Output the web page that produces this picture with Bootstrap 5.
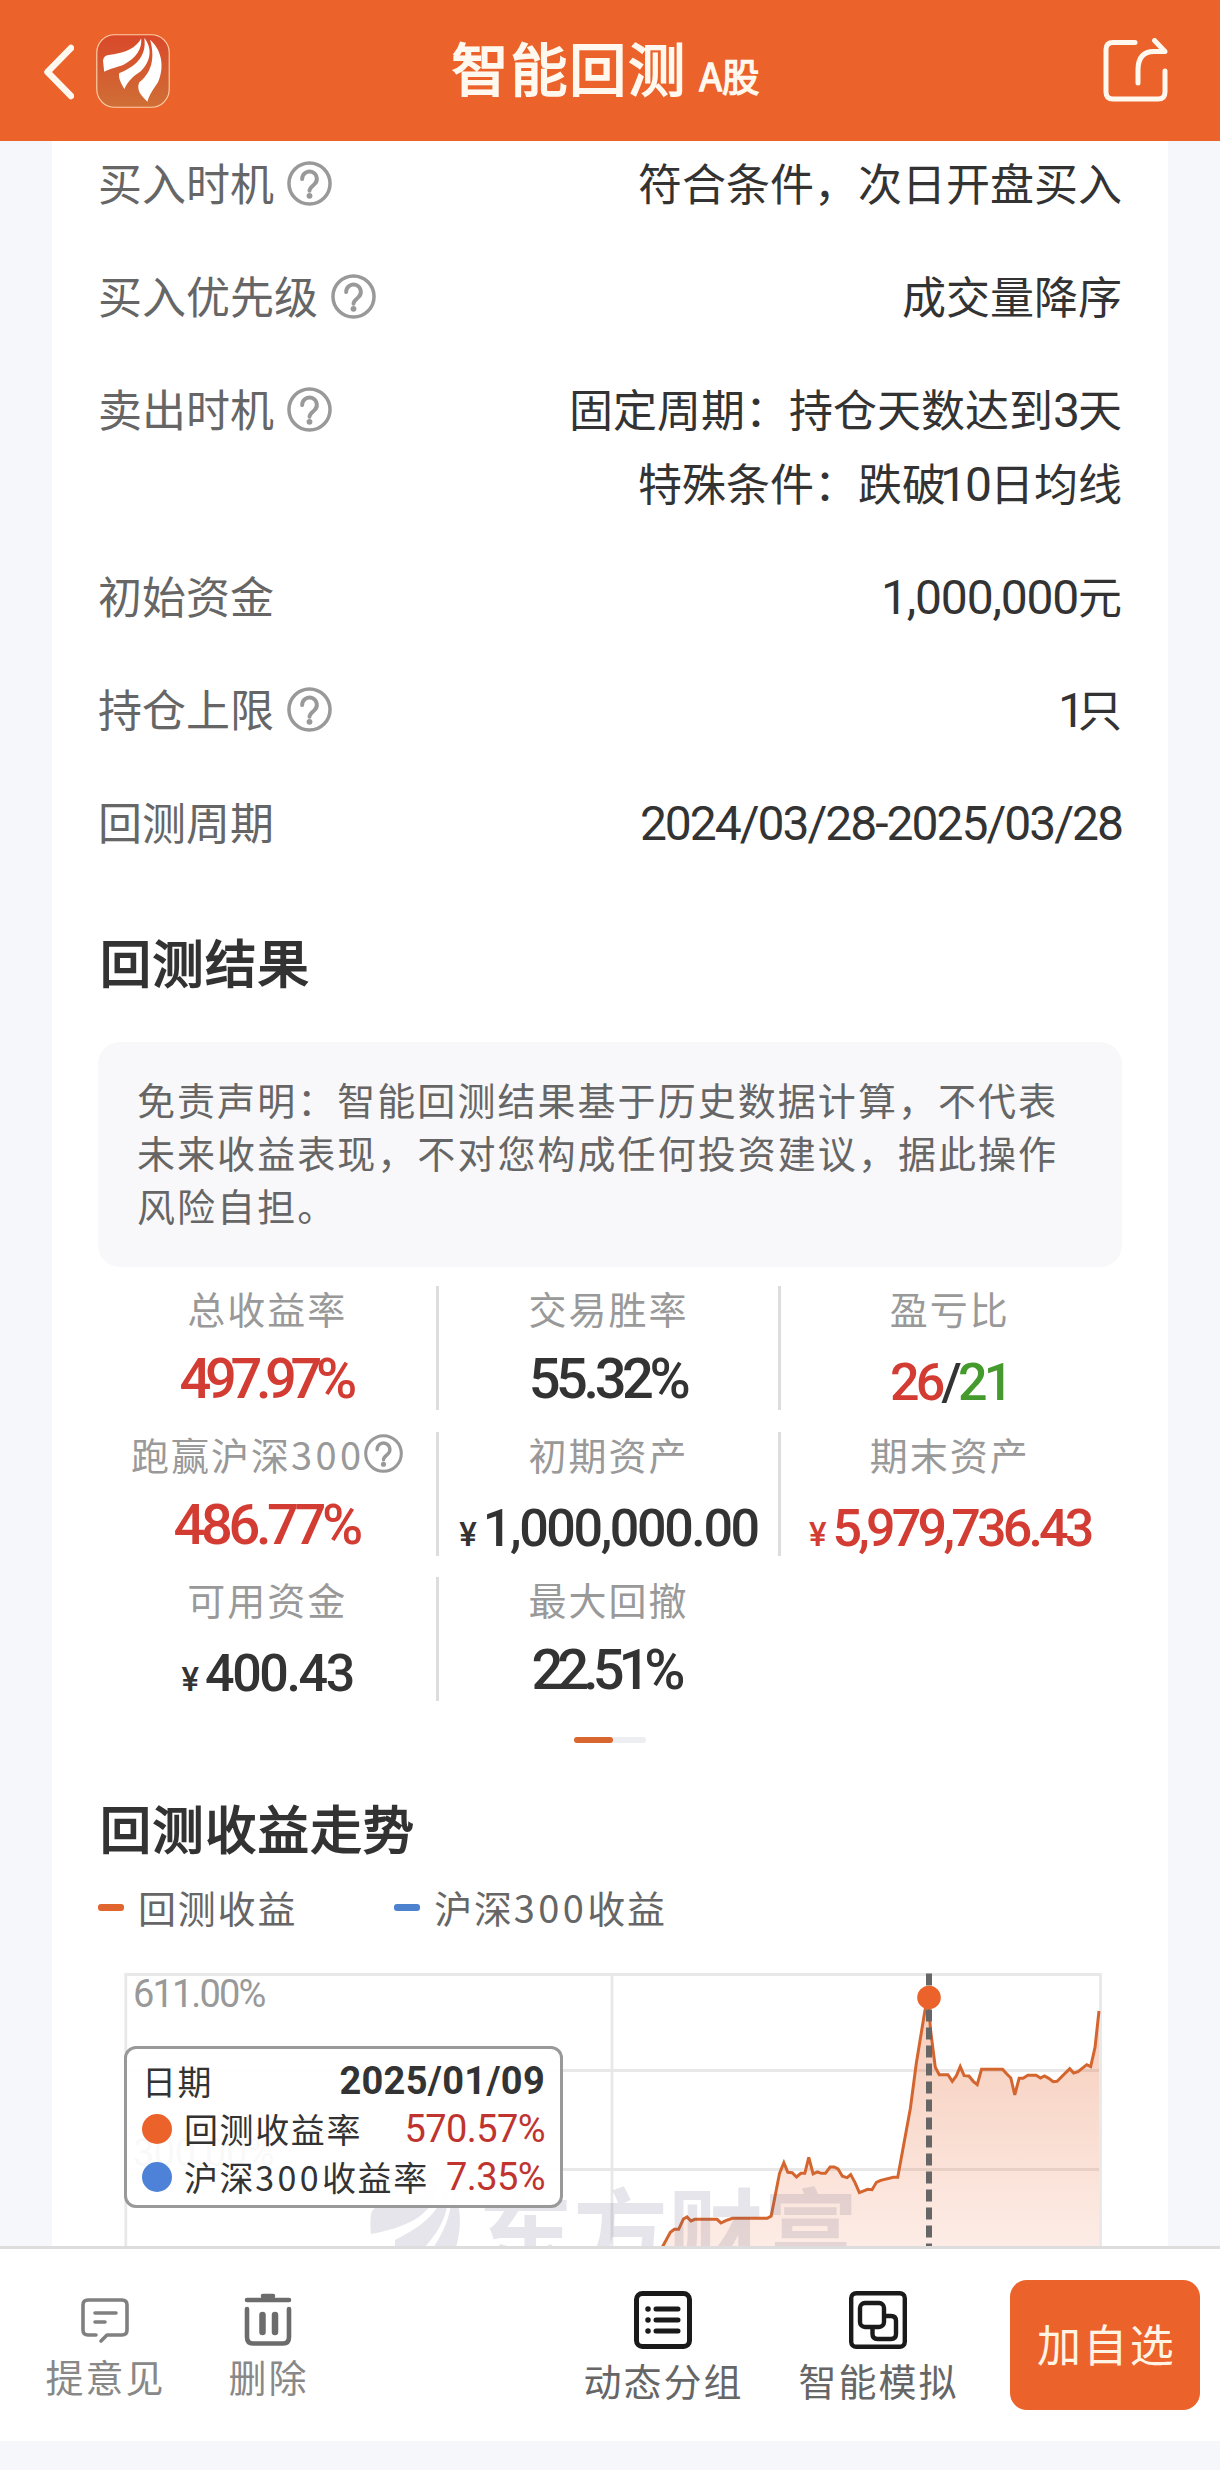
<!DOCTYPE html>
<html lang="zh-CN">
<head>
<meta charset="utf-8">
<meta name="viewport" content="width=device-width, initial-scale=1">
<title>智能回测</title>
<link href="https://cdn.jsdelivr.net/npm/bootstrap@5.3.0/dist/css/bootstrap.min.css" rel="stylesheet">
<style>
body{background:#f6f7fa;color:#333;font-family:"Noto Sans CJK SC",sans-serif;line-height:1}
.num{font-family:Roboto,"Noto Sans CJK SC",sans-serif}
.topbar{height:141px;background:#eb622b;color:#fff8ee;padding:0 52px 0 43px}
.topbar .side{width:200px}
.topbar h1{font-size:57px;letter-spacing:1.9px;font-weight:400;-webkit-text-stroke:1.9px #fff8ee;line-height:60px}
.topbar h1 small{font-size:37.5px;letter-spacing:0;font-weight:400;-webkit-text-stroke:1.3px #fff8ee;margin-left:12px}
.sheet{margin:0 52px;padding:0 46px;height:2105px;overflow:hidden}
.params{gap:27px}
.params dt{font-size:44px;font-weight:400;color:#666;height:86px;gap:13px;padding-bottom:4px}
.params dt svg{margin-top:3px}
.params dd{font-size:44px;line-height:74px;padding:4px 0 8px}
.params dd .num{font-size:48px;letter-spacing:-2px;line-height:1}
.params dd .cash{letter-spacing:-1.2px}
.params dd .one{margin-left:-6px}
.params dd .lone{letter-spacing:-7px}
.sec{font-size:51px;letter-spacing:1.6px;font-weight:400;-webkit-text-stroke:1.8px #333;line-height:60px;padding-left:2px;position:static}
.sec-a{margin:65px 0 0}
.sec-b{margin:54px 0 0}
.notice{height:225px;margin-top:51px;padding:30px 38px 0 39px;border-radius:22px;background:#f8f8fa;color:#666;font-size:38px;letter-spacing:2.05px;line-height:53px}
.stats{margin-top:19px;row-gap:21.5px}
.cell{height:124px;border-right:3px solid #ddd}
.cell.last{border-color:transparent}
.cell .lab{height:44px;font-size:38px;letter-spacing:2px;color:#999}
.cell .val{height:50px;margin-top:24px;font-weight:500;font-size:56px}
.cell .money{font-size:52px;padding-top:3px;align-items:baseline}
.cell .money i{font-style:normal;font-size:33px;margin-right:6px;letter-spacing:0}
.up{color:#d33c33}.down{color:#459a2d}
.d300{letter-spacing:3.4px}
.k1{letter-spacing:-6.4px;padding-right:4px}.k2{letter-spacing:-4.4px;padding-right:2px}.k3{letter-spacing:-2.4px}.k4{letter-spacing:-3.8px}.k5{letter-spacing:-4.4px;padding-right:2px}.k6{letter-spacing:-6px;padding-right:6px}
.pager{margin-top:36px;width:72px;height:6px;border-radius:3px;background:#eceef2}
.pager span{width:39px;border-radius:3px;background:#d9662f}
.legend-row{height:44px;margin-top:29px;font-size:38px;letter-spacing:1.8px;color:#666;padding-bottom:2px}
.dash{width:26px;height:7px;border-radius:3px;margin-right:14px}
.dash.b{margin-left:97px}
.plot{margin-top:30px;height:287px}
.tip{left:26px;top:86px;width:439px;height:162px;border:3px solid #999;border-radius:12px;background:rgba(255,255,255,.94);padding:8px 15px 0 15px;font-size:34px;letter-spacing:1.6px}
.tip .line{height:48px}
.tip .num{font-size:38px;letter-spacing:-.6px}
.tip .num.fw-bold{letter-spacing:.3px}
.tip .dot{width:30px;height:30px;border-radius:50%;margin-right:12px}
.tabs{height:195px;border-top:3px solid #ddd;background:#fff;padding:0 20px 0 23px;font-size:38px;letter-spacing:2px}
.tabs .it{padding-top:41px}
.tabs svg{height:60px;display:block}
.tabs .it span{line-height:40px;padding-left:2px}
.tabs .gray{width:163px;color:#888}
.tabs .gray span{margin-top:6px}
.tabs .dark{width:215px;color:#666}
.tabs .dark span{margin-top:10px}
.add-btn{width:190px;height:130px;margin:31px 0 0 25px;background:#eb622b;color:#fff3e4;border-radius:17px;font-size:44px;letter-spacing:2.4px}
.add-btn span{display:block;padding:0 0 4px 3px}
</style>
<script src="https://cdn.jsdelivr.net/npm/bootstrap@5.3.0/dist/js/bootstrap.bundle.min.js"></script>
</head>
<body>
<svg width="0" height="0" class="position-absolute">
  <symbol id="help" viewBox="0 0 46 46">
    <circle cx="23" cy="23" r="21" fill="none" stroke="#999" stroke-width="3.6"/>
    <path d="M15.500 18.500a7.500 7.500 0 1 1 12.600 5.200c-2.800 2.500-5.100 3.800-5.100 6.800" fill="none" stroke="#999" stroke-width="4" stroke-linecap="round"/>
    <circle cx="23" cy="35.600" r="3" fill="#999"/>
  </symbol>
</svg>

<header class="topbar d-flex align-items-center justify-content-between">
  <div class="side d-flex align-items-center">
    <svg width="31" height="58" viewBox="0 0 31 58" fill="none" stroke="#fff8ee" stroke-width="6.500" stroke-linecap="round" stroke-linejoin="round"><path d="M28 6 4.500 30 28 54"/></svg>
    <svg width="74" height="74" viewBox="247 105 190 222" preserveAspectRatio="none" style="margin-left:22px">
      <defs><linearGradient id="lg" x1="0" y1="0" x2="0" y2="1"><stop offset="0" stop-color="#d9482a"/><stop offset="1" stop-color="#cf6f36"/></linearGradient></defs>
      <rect x="249" y="107" width="186" height="218" rx="46" ry="54" fill="url(#lg)" stroke="#ffcfa8" stroke-width="3"/>
      <g fill="#fff">
        <path d="M268 218 265 185Q266 170 280 168C325 162 352 145 363 118 C366 150 350 178 318 197 C300 205 280 210 268 218Z"/>
        <path d="M320 270C312 255 303 235 307 222C345 205 378 175 371 117C394 150 386 190 362 217C342 232 328 248 320 270Z"/>
        <path d="M379 308C362 290 350 272 358 250C382 228 402 190 386 122C422 160 420 215 406 250C395 270 385 285 379 308Z"/>
      </g>
    </svg>
  </div>
  <h1 class="m-0 text-nowrap">智能回测<small>A股</small></h1>
  <div class="side d-flex justify-content-end">
    <svg width="65" height="66" viewBox="0 0 65 66" fill="none" stroke="#fff8ee" stroke-width="5" stroke-linecap="round" stroke-linejoin="round"><path d="M32 4.500H10Q3 4.500 3 11.500V54Q3 61 10 61H55Q62 61 62 54V33M35 45V32Q35 13.500 51 13.500H62L51.500 2.500"/></svg>
  </div>
</header>

<main class="sheet bg-white">
  <dl class="params d-flex flex-column m-0">
    <div class="d-flex justify-content-between"><dt class="d-flex align-items-center">买入时机<svg width="45" height="45"><use href="#help"/></svg></dt><dd class="m-0">符合条件，次日开盘买入</dd></div>
    <div class="d-flex justify-content-between"><dt class="d-flex align-items-center">买入优先级<svg width="45" height="45"><use href="#help"/></svg></dt><dd class="m-0">成交量降序</dd></div>
    <div class="d-flex justify-content-between"><dt class="d-flex align-items-center">卖出时机<svg width="45" height="45"><use href="#help"/></svg></dt><dd class="m-0 text-end">固定周期：持仓天数达到<span class="num">3</span>天<br>特殊条件：跌破<span class="num one">10</span>日均线</dd></div>
    <div class="d-flex justify-content-between"><dt class="d-flex align-items-center">初始资金</dt><dd class="m-0"><span class="num cash">1,000,000</span>元</dd></div>
    <div class="d-flex justify-content-between"><dt class="d-flex align-items-center">持仓上限<svg width="45" height="45"><use href="#help"/></svg></dt><dd class="m-0"><span class="num lone">1</span>只</dd></div>
    <div class="d-flex justify-content-between"><dt class="d-flex align-items-center">回测周期</dt><dd class="m-0"><span class="num">2024/03/28-2025/03/28</span></dd></div>
  </dl>

  <h2 class="sec sec-a">回测结果</h2>
  <p class="notice mb-0">免责声明：智能回测结果基于历史数据计算，不代表未来收益表现，不对您构成任何投资建议，据此操作风险自担。</p>

  <section class="stats row row-cols-3 gx-0">
    <div class="cell"><div class="lab d-flex align-items-center justify-content-center">总收益率</div><div class="val num up k1 d-flex align-items-center justify-content-center">497.97%</div></div>
    <div class="cell"><div class="lab d-flex align-items-center justify-content-center">交易胜率</div><div class="val num k5 d-flex align-items-center justify-content-center">55.32%</div></div>
    <div class="cell last"><div class="lab d-flex align-items-center justify-content-center">盈亏比</div><div class="val num money k4 d-flex justify-content-center"><span class="up">26</span>/<span class="down">21</span></div></div>
    <div class="cell"><div class="lab d-flex align-items-center justify-content-center">跑赢沪深<span class="d300">300</span><svg width="39" height="39"><use href="#help"/></svg></div><div class="val num up k2 d-flex align-items-center justify-content-center">486.77%</div></div>
    <div class="cell"><div class="lab d-flex align-items-center justify-content-center">初期资产</div><div class="val num money k3 d-flex justify-content-center"><i>¥</i>1,000,000.00</div></div>
    <div class="cell last"><div class="lab d-flex align-items-center justify-content-center">期末资产</div><div class="val num money up k4 d-flex justify-content-center"><i>¥</i>5,979,736.43</div></div>
    <div class="cell"><div class="lab d-flex align-items-center justify-content-center">可用资金</div><div class="val num money k3 d-flex justify-content-center"><i>¥</i>400.43</div></div>
    <div class="cell last"><div class="lab d-flex align-items-center justify-content-center">最大回撤</div><div class="val num k6 d-flex align-items-center justify-content-center">22.51%</div></div>
  </section>
  <div class="pager d-flex mx-auto"><span></span></div>

  <h2 class="sec sec-b">回测收益走势</h2>
  <div class="legend-row d-flex align-items-center">
    <span class="dash" style="background:#e0652f"></span>回测收益
    <span class="dash b" style="background:#4d82cf"></span>沪深<span class="d300">300</span>收益
  </div>

  <div class="plot position-relative">
    <svg class="d-block" width="1024" height="287" viewBox="98 1960 1024 287">
      <defs><linearGradient id="fillg" gradientUnits="userSpaceOnUse" x1="0" y1="170" x2="0" y2="920"><stop offset="0" stop-color="#e0622b" stop-opacity=".33"/><stop offset="1" stop-color="#eb622b" stop-opacity=".12"/></linearGradient></defs>
      <g fill="none" stroke="#e8e8e8" stroke-width="2.800"><path d="M125.800 2260V1974.500H1100.500V2260M612 1974V2260M126 2070.500H1100M126 2169.500H1100"/></g>
      <text x="133" y="2007" class="num" font-size="38" letter-spacing="-1.9" fill="#999">611.00%</text>
      <text x="133" y="2166" class="num" font-size="38" letter-spacing="-.5" fill="#999">300.00%</text>
      <g transform="translate(600 1940) scale(.3954 .3333)">
        <path fill="url(#fillg)" d="M160 918 178 877 188 868H199L211 837 220 831 230 843 240 838H296L306 849 318 842 335 835H423L433 828 454 700 465 668 475 697 486 698 497 711 508 700H518L528 652 539 702 550 696 560 700H570L582 681H592L602 687 613 709 625 713 634 704 645 728 656 758 677 748 688 749 699 727 710 721 742 712H753L785 505 800 370 822 210 830 173 836 270 848 382 858 404H880L891 424 901 408 911 380 921 407 933 408 944 424 954 434 965 388H1018L1029 402 1039 414 1049 465 1060 415H1070L1082 406H1103L1114 414 1124 408 1135 415 1146 425 1156 424 1188 386 1198 399 1209 395 1231 374 1241 380 1252 322 1262 213V925H160Z"/>
        <path fill="none" stroke="#d4652f" stroke-width="3" vector-effect="non-scaling-stroke" d="M156 925 178 877 188 868H199L211 837 220 831 230 843 240 838H296L306 849 318 842 335 835H423L433 828 454 700 465 668 475 697 486 698 497 711 508 700H518L528 652 539 702 550 696 560 700H570L582 681H592L602 687 613 709 625 713 634 704 645 728 656 758 677 748 688 749 699 727 710 721 742 712H753L785 505 800 370 822 210 830 173 836 270 848 382 858 404H880L891 424 901 408 911 380 921 407 933 408 944 424 954 434 965 388H1018L1029 402 1039 414 1049 465 1060 415H1070L1082 406H1103L1114 414 1124 408 1135 415 1146 425 1156 424 1188 386 1198 399 1209 395 1231 374 1241 380 1252 322 1262 213"/>
      </g>
      <g fill="#5a5078" fill-opacity=".15">
        <path d="M371 2234C370 2215 370 2208 380 2206C400 2204 424 2196 437 2183C437 2210 415 2226 371 2234Z"/>
        <path d="M395 2260V2240C425 2225 442 2210 445 2185C452 2205 445 2230 412 2260Z"/>
        <path d="M424 2260C444 2235 452 2215 452 2190C464 2210 461 2235 452 2260Z"/>
        <text x="478" y="2269" font-family="Noto Sans CJK SC" font-weight="700" font-size="95">东方财富</text>
      </g>
      <path d="M929 1973.500V2247" stroke="#666" stroke-width="6" stroke-dasharray="12 6"/>
      <circle cx="929" cy="1997.500" r="11.800" fill="#eb622b"/>
    </svg>
    <div class="tip position-absolute">
      <div class="line d-flex align-items-center justify-content-between"><span>日期</span><span class="num fw-bold">2025/01/09</span></div>
      <div class="line d-flex align-items-center"><span class="dot" style="background:#eb622b"></span>回测收益率<span class="num ms-auto" style="color:#c0342f">570.57%</span></div>
      <div class="line d-flex align-items-center"><span class="dot" style="background:#4d82d8"></span>沪深<span class="d300">300</span>收益率<span class="num ms-auto" style="color:#c0342f">7.35%</span></div>
    </div>
  </div>
</main>

<nav class="tabs d-flex">
  <div class="it gray d-flex flex-column align-items-center">
    <svg width="48" viewBox="0 0 48 60" fill="none" stroke="#808080" stroke-width="3.600" stroke-linecap="round" stroke-linejoin="round"><path d="M15 45H7Q2 45 2 40V15Q2 10 7 10H41Q46 10 46 15V40Q46 45 41 45H26L20 51M14 23H35M14 32H24"/></svg>
    <span>提意见</span>
  </div>
  <div class="it gray d-flex flex-column align-items-center">
    <svg width="48" viewBox="0 0 48 60" fill="none" stroke="#6c6c6c" stroke-width="4.600" stroke-linecap="round" stroke-linejoin="round"><path d="M3 10H45M19 6H29M3 19V47Q3 53.500 9 53.500H39Q45 53.500 45 47V19"/><path d="M18.500 25V42M31 25V42" stroke-width="6.500"/></svg>
    <span>删除</span>
  </div>
  <div class="it dark d-flex flex-column align-items-center ms-auto">
    <svg width="58" viewBox="0 0 58 60" fill="none" stroke="#1a1a1a" stroke-width="5" stroke-linecap="round"><rect x="2.500" y="3.500" width="53" height="53" rx="6"/><path d="M22 19H44M22 30H44M22 41H44"/><path d="M14 19h.01M14 30h.01M14 41h.01" stroke-width="5.500"/></svg>
    <span>动态分组</span>
  </div>
  <div class="it dark d-flex flex-column align-items-center">
    <svg width="58" viewBox="0 0 58 60" fill="none" stroke="#1a1a1a" stroke-width="4.400"><rect x="2.200" y="3.200" width="53.600" height="53.600" rx="5"/><rect x="11" y="13" width="24" height="24" rx="5"/><path d="M35 26H42Q47 26 47 31V44Q47 49 42 49H28.500Q23.500 49 23.500 44V37"/></svg>
    <span>智能模拟</span>
  </div>
  <button class="add-btn btn border-0 p-0" type="button"><span>加自选</span></button>
</nav>
</body>
</html>
